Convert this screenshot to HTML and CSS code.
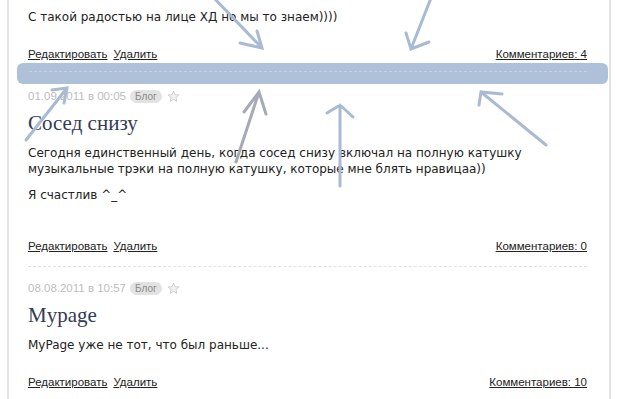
FILE: index.html
```html
<!DOCTYPE html>
<html lang="ru">
<head>
    <meta charset="UTF-8">
    <title>Блог</title>
    <link rel="stylesheet" href="styles.css">
</head>
<body>
    <div class="page">
        <div class="feed">
            <!-- предыдущий пост (обрезан сверху) -->
            <div class="post">
                <div class="post-body">
                    <p>С такой радостью на лице ХД но мы то знаем))))</p>
                </div>
                <div class="post-actions">
                    <div><a href="#">Редактировать</a><a href="#">Удалить</a></div>
                    <a href="#">Комментариев: 4</a>
                </div>
            </div>

            <div class="drop-bar"></div>

            <div class="post">
                <div class="post-meta">
                    <span>01.09.2011 в 00:05</span>
                    <span class="tag">Блог</span>
                    <svg class="star" width="13" height="13" viewBox="0 0 24 24"><path d="M12 2l2.9 6.6 7.1.6-5.4 4.7 1.6 7-6.2-3.7-6.2 3.7 1.6-7L2 9.2l7.1-.6z" fill="#f1f1f1" stroke="#c8c8c8" stroke-width="1.6" stroke-linejoin="round"/></svg>
                </div>
                <h2 class="post-title">Сосед снизу</h2>
                <div class="post-body">
                    <p>Сегодня единственный день, когда сосед снизу включал на полную катушку музыкальные трэки на полную катушку, которые мне блять нравицаа))</p>
                    <p class="last">Я счастлив ^_^</p>
                </div>
                <div class="post-actions">
                    <div><a href="#">Редактировать</a><a href="#">Удалить</a></div>
                    <a href="#">Комментариев: 0</a>
                </div>
            </div>

            <div class="post">
                <div class="post-meta">
                    <span>08.08.2011 в 10:57</span>
                    <span class="tag">Блог</span>
                    <svg class="star" width="13" height="13" viewBox="0 0 24 24"><path d="M12 2l2.9 6.6 7.1.6-5.4 4.7 1.6 7-6.2-3.7-6.2 3.7 1.6-7L2 9.2l7.1-.6z" fill="#f1f1f1" stroke="#c8c8c8" stroke-width="1.6" stroke-linejoin="round"/></svg>
                </div>
                <h2 class="post-title">Mypage</h2>
                <div class="post-body">
                    <p>MyPage уже не тот, что был раньше...</p>
                </div>
                <div class="post-actions">
                    <div><a href="#">Редактировать</a><a href="#">Удалить</a></div>
                    <a href="#">Комментариев: 10</a>
                </div>
            </div>
        </div>

        <!-- стрелки-пометки поверх скриншота -->
        <svg class="marks" width="617" height="399" viewBox="0 0 617 399">
            <g fill="none" stroke="#a9bad3" stroke-width="3" stroke-linecap="round">
                <path d="M214 -2 L262 48 M240 43 L262 48 L257 31"/>
                <path d="M431 -2 L411 49 M406 33 L411 49 L429 42"/>
                <path d="M26 140 L67 88 M52 90 L67 88 L64 103"/>
                <path d="M340 186 L340 105 M327 113 L340 105 L353 117"/>
                <path d="M546 145 L481 92 M479 105 L481 92 L502 94"/>
            </g>
            <path d="M236 162 L259 92 M244 112 L259 92 L266 114" fill="none" stroke="#a6aab6" stroke-width="3" stroke-linecap="round"/>
        </svg>
    </div>
</body>
</html>
```

FILE: styles.css
```css
body {
    margin: 0;
    background: #fff;
    font-family: "DejaVu Sans", Verdana, sans-serif;
    color: #222;
}
.page {
    position: relative;
    width: 617px;
    height: 399px;
    overflow: hidden;
}
.feed {
    box-sizing: border-box;
    margin-left: 7px;
    width: 604px;
    height: 399px;
    border-left: 2px solid #e3e3e3;
    border-right: 2px solid #e3e3e3;
    padding: 9px 22px 0 19px;
}
.post {
    border-bottom: 1px dashed #e2e2e2;
    padding-bottom: 12px;
    margin-bottom: 13px;
}
.post:first-child,
.post:last-child {
    border-bottom: none;
    padding-bottom: 0;
    margin-bottom: 0;
}
.post-meta {
    display: flex;
    align-items: center;
    gap: 4px;
    height: 16px;
    font-family: "Liberation Sans", Tahoma, sans-serif;
    font-size: 11.5px;
    color: #bdbdbd;
}
.tag {
    background: #e2e2e2;
    color: #8a8a8a;
    border-radius: 7px;
    padding: 0 5px;
    font-size: 10px;
    line-height: 13px;
}
.star {
    margin-left: 1px;
}
.post-title {
    margin: 6px 0 0;
    font-family: "Liberation Serif", Georgia, serif;
    font-weight: normal;
    font-size: 21px;
    line-height: 26px;
    color: #343b54;
}
.post-body {
    padding-top: 9px;
    font-size: 12px;
    line-height: 16px;
}
.post:first-child .post-body {
    padding-top: 0;
}
.post-body p {
    margin: 0;
}
.post-body p + p {
    margin-top: 10px;
}
.post-body p.last {
    padding-bottom: 14px;
}
.post-actions {
    display: flex;
    justify-content: space-between;
    margin-top: 21px;
    font-family: "Liberation Sans", Tahoma, sans-serif;
    font-size: 11.5px;
    line-height: 16px;
}
.post-actions a {
    color: #222;
}
.post-actions div a + a {
    margin-left: 6px;
}
.drop-bar {
    margin: 1px -21px 4px -11px;
    height: 21px;
    border-radius: 6px;
    background: #afc1d9;
    position: relative;
}
.drop-bar::after {
    content: "";
    position: absolute;
    left: 12px;
    right: 21px;
    top: 8px;
    border-top: 1px dashed #c3d0e2;
}
.marks {
    position: absolute;
    left: 0;
    top: 0;
    pointer-events: none;
}
```
